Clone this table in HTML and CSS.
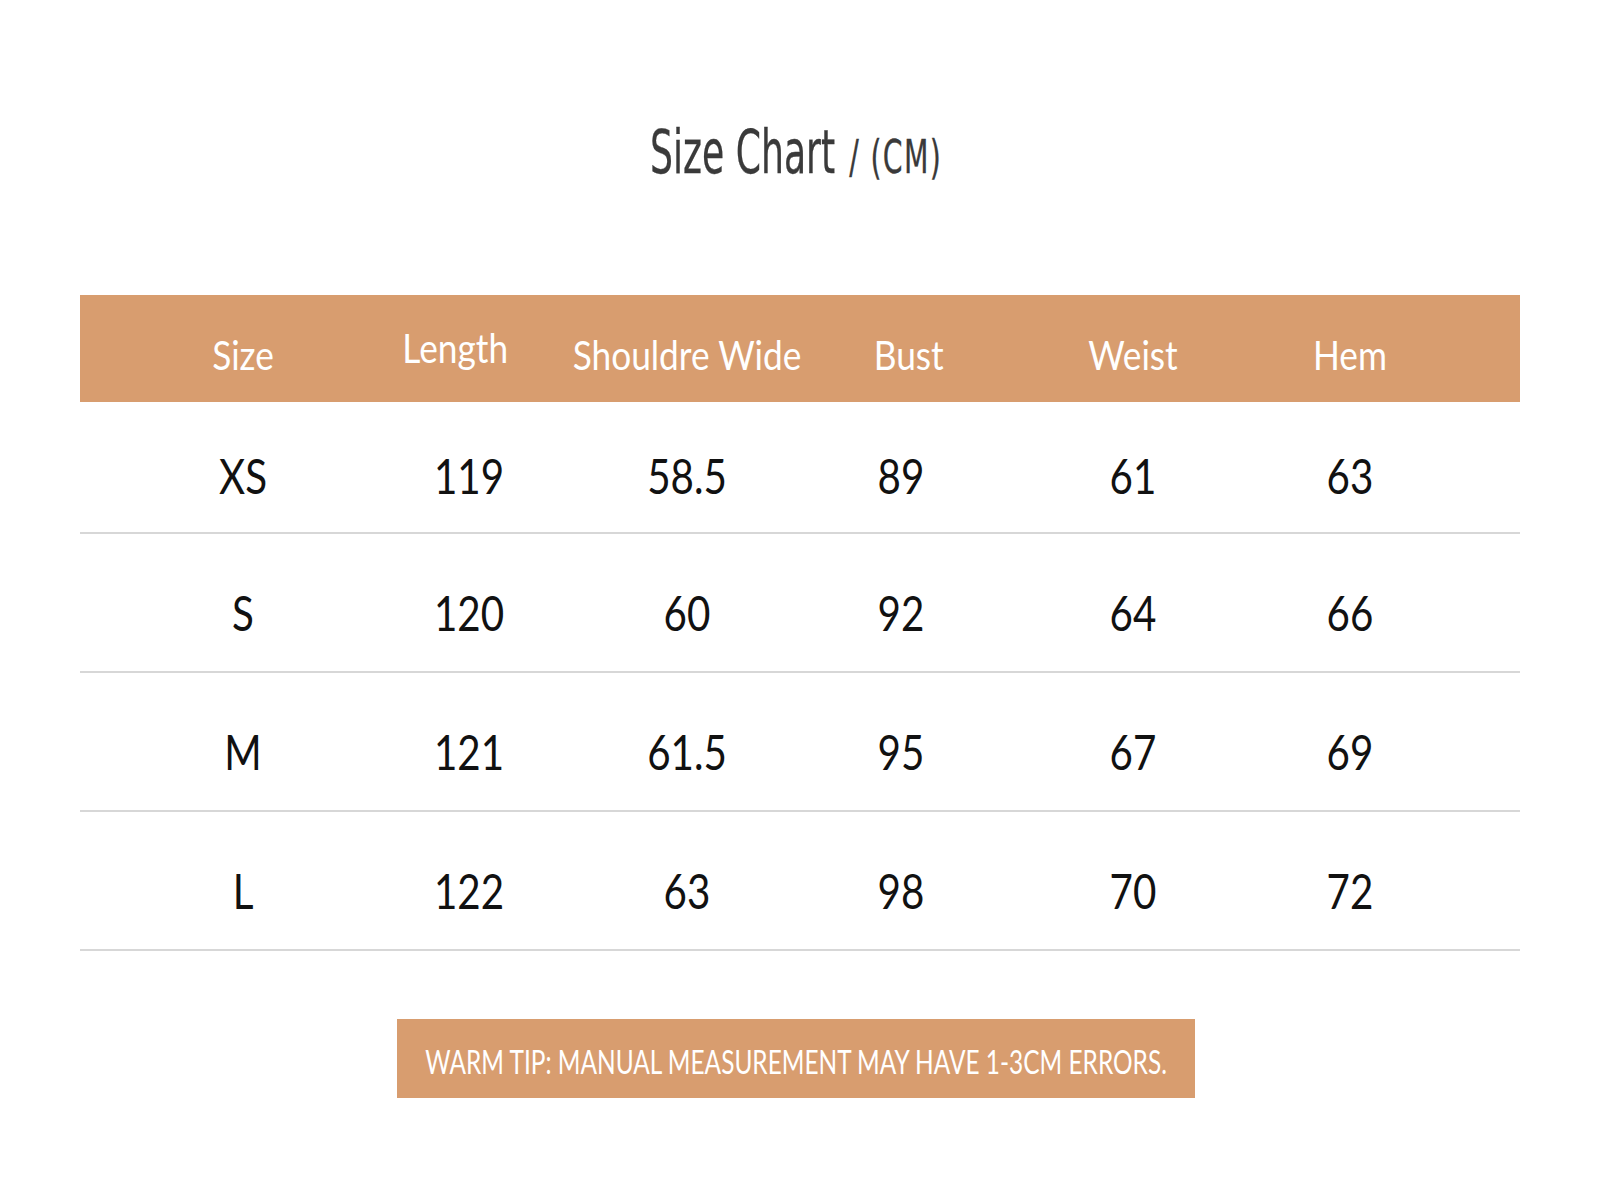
FILE: index.html
```html
<!DOCTYPE html>
<html lang="en">
<head>
<meta charset="utf-8">
<title>Size Chart</title>
<link rel="stylesheet" href="styles.css">
</head>
<body>
<div class="page">
  <h1 class="title"><span class="title-inner">Size Chart <span class="title-unit">/ (CM)</span></span></h1>

  <div class="chart">
    <div class="head">
      <div class="hcell">Size</div>
      <div class="hcell hcell--length">Length</div>
      <div class="hcell">Shouldre Wide</div>
      <div class="hcell hcell--bust">Bust</div>
      <div class="hcell">Weist</div>
      <div class="hcell">Hem</div>
    </div>
    <div class="row row--first">
      <div class="cell">XS</div><div class="cell">119</div><div class="cell">58.5</div><div class="cell">89</div><div class="cell">61</div><div class="cell">63</div>
    </div>
    <div class="row">
      <div class="cell">S</div><div class="cell">120</div><div class="cell">60</div><div class="cell">92</div><div class="cell">64</div><div class="cell">66</div>
    </div>
    <div class="row">
      <div class="cell">M</div><div class="cell">121</div><div class="cell">61.5</div><div class="cell">95</div><div class="cell">67</div><div class="cell">69</div>
    </div>
    <div class="row">
      <div class="cell">L</div><div class="cell">122</div><div class="cell">63</div><div class="cell">98</div><div class="cell">70</div><div class="cell">72</div>
    </div>
  </div>

  <div class="tip"><span class="tip-text">WARM TIP: MANUAL MEASUREMENT MAY HAVE 1-3CM ERRORS.</span></div>
</div>
</body>
</html>
```

FILE: styles.css
```css
* { box-sizing: border-box; }

html, body {
  margin: 0;
  padding: 0;
  background: #ffffff;
}

body {
  font-family: Lato, "Liberation Sans", sans-serif;
  color: #111111;
}

.page {
  width: 1600px;
  height: 1200px;
  padding-top: 120px;
  display: flex;
  flex-direction: column;
  align-items: center;
}

.title {
  margin: 0;
  height: 64px;
  font-family: "DejaVu Sans Condensed", "DejaVu Sans", sans-serif;
  font-size: 60px;
  line-height: 64px;
  font-weight: normal;
  color: #3a3a3a;
  text-align: center;
  width: 100%;
  white-space: nowrap;
}

.title-inner {
  display: inline-block;
  transform: scaleX(0.67);
  transform-origin: center;
  margin-left: -8px;
  -webkit-text-stroke: 0.3px #3a3a3a;
}

.title-unit {
  font-size: 47px;
  letter-spacing: 2px;
  margin-left: 4px;
}

.chart {
  margin-top: 111px;
  width: 1440px;
}

.head {
  height: 107px;
  background: #d89d6f;
  display: grid;
  grid-template-columns: 222px 230px 206px 222px 242px 192px;
  padding-left: 52px;
  padding-top: 12px;
  align-items: center;
}

.hcell {
  display: flex;
  justify-content: center;
  color: #ffffff;
  font-size: 41px;
  white-space: nowrap;
  transform: scaleX(0.86);
}

.hcell--length {
  padding-right: 32px;
  padding-bottom: 14px;
}

.hcell--bust {
  padding-left: 18px;
}

.row {
  height: 139px;
  display: grid;
  grid-template-columns: 222px 230px 206px 222px 242px 192px;
  padding-left: 52px;
  padding-top: 20px;
  align-items: center;
  border-bottom: 2px solid #d7d7d7;
}

.row--first {
  height: 132px;
  padding-top: 16px;
}

.cell {
  display: flex;
  justify-content: center;
  font-size: 48px;
  color: #111111;
  white-space: nowrap;
  transform: scaleX(0.84);
}

.tip {
  margin-top: 68px;
  width: 798px;
  height: 79px;
  background: #d89d6f;
  color: #ffffff;
  display: flex;
  align-items: center;
  justify-content: center;
  font-size: 33px;
  padding-top: 4px;
  margin-right: 8px;
  white-space: nowrap;
  overflow: hidden;
}

.tip-text {
  display: inline-block;
  transform: scaleX(0.74);
  transform-origin: center;
}
```
